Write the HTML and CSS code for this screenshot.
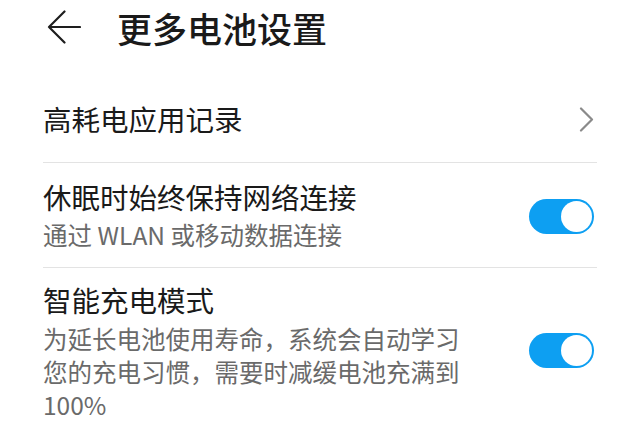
FILE: index.html
```html
<!DOCTYPE html>
<html lang="zh-CN">
<head>
<meta charset="utf-8">
<link rel="stylesheet" href="styles.css">
</head>
<body>
<header class="topbar">
  <svg class="back" width="34" height="34" viewBox="0 0 34 34" aria-hidden="true">
    <path d="M2 17 H33 M17.5 1.5 L2 17 L17.5 32.5" fill="none" stroke="#1e1e1e" stroke-width="2.2" stroke-linecap="round" stroke-linejoin="round"/>
  </svg>
  <h1 class="title">更多电池设置</h1>
</header>
<main class="list">
  <div class="item item-link">
    <div class="text"><div class="label">高耗电应用记录</div></div>
    <svg class="chev" width="15" height="25" viewBox="0 0 15 25" aria-hidden="true">
      <path d="M2 1.5 L13 12.5 L2 23.5" fill="none" stroke="#8a8a8a" stroke-width="2.2" stroke-linecap="round" stroke-linejoin="round"/>
    </svg>
  </div>
  <div class="item item-two">
    <div class="text">
      <div class="label">休眠时始终保持网络连接</div>
      <div class="sub">通过 WLAN 或移动数据连接</div>
    </div>
    <div class="toggle on"><span class="knob"></span></div>
  </div>
  <div class="item item-three">
    <div class="text">
      <div class="label">智能充电模式</div>
      <div class="sub desc">为延长电池使用寿命，系统会自动学习您的充电习惯，需要时减缓电池充满到100%</div>
    </div>
    <div class="toggle on"><span class="knob"></span></div>
  </div>
</main>
</body>
</html>
```
FILE: styles.css
```css
html, body {
  margin: 0;
  padding: 0;
  background: #ffffff;
}
body {
  width: 640px;
  height: 427px;
  overflow: hidden;
  font-family: "Noto Sans CJK SC", "Noto Sans", sans-serif;
  color: #1a1a1a;
}
.topbar {
  height: 56px;
  display: flex;
  align-items: center;
  padding-left: 47px;
}
.back {
  display: block;
  margin-top: -3px;
}
.title {
  margin: 0 0 0 36px;
  font-size: 35px;
  font-weight: 500;
  line-height: 56px;
  color: #1a1a1a;
}
.list {
  margin-top: 20px;
  padding: 0 43px;
}
.item {
  display: flex;
  align-items: center;
  border-bottom: 1px solid #e3e3e3;
}
.item:last-child {
  border-bottom: none;
}
.item-link {
  height: 86px;
}
.item-two {
  padding: 15px 0 13px;
}
.item-three {
  padding: 12px 0 10px;
}
.text {
  flex: 0 0 auto;
  max-width: 428px;
}
.label {
  font-size: 28.5px;
  line-height: 38px;
  color: #1a1a1a;
}
.item-three .label {
  line-height: 40px;
}
.sub {
  font-size: 24.5px;
  line-height: 38px;
  color: #6a6a6a;
}
.desc {
  line-height: 33px;
  margin-top: 2px;
}
.chev {
  margin-left: auto;
  margin-right: 3px;
  display: block;
}
.toggle {
  margin-left: auto;
  margin-right: 3px;
  width: 65px;
  height: 35px;
  border-radius: 18px;
  background: #0d9ff2;
  position: relative;
  flex: 0 0 auto;
}
.knob {
  position: absolute;
  top: 2px;
  right: 2px;
  width: 31px;
  height: 31px;
  border-radius: 50%;
  background: #ffffff;
}
```
